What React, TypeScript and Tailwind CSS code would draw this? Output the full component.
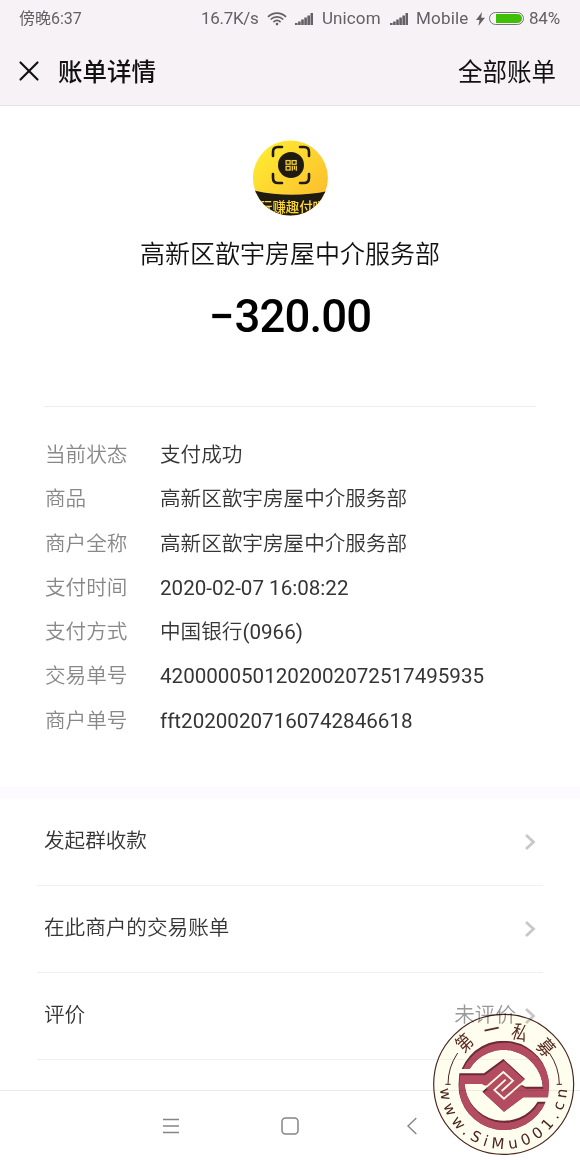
import { X } from "lucide-react";

const details = [
  { label: "当前状态", value: "支付成功" },
  { label: "商品", value: "高新区歆宇房屋中介服务部" },
  { label: "商户全称", value: "高新区歆宇房屋中介服务部" },
  { label: "支付时间", value: "", digits: "2020-02-07 16:08:22" },
  { label: "支付方式", value: "中国银行", digits: "(0966)" },
  { label: "交易单号", value: "", digits: "4200000501202002072517495935" },
  { label: "商户单号", value: "", digits: "fft20200207160742846618" },
];

const actions = [
  { label: "发起群收款", hint: "" },
  { label: "在此商户的交易账单", hint: "" },
  { label: "评价", hint: "未评价" },
];

function Signal() {
  return (
    <svg className="h-3 w-[18px]" viewBox="0 0 18 12" fill="#636165">
      <rect x="0" y="10" width="2.6" height="2" />
      <rect x="3.1" y="8.5" width="2.6" height="3.5" />
      <rect x="6.2" y="6.5" width="2.6" height="5.5" />
      <rect x="9.3" y="4.5" width="2.6" height="7.5" />
      <rect x="12.4" y="2.5" width="2.6" height="9.5" />
      <rect x="15.5" y="0" width="2.5" height="12" />
    </svg>
  );
}

function StatusBar() {
  return (
    <div className="flex h-9 items-center pl-[19px] pt-px text-[17px] text-[#636165]">
      <span className="w-[182px] text-[16px]">傍晚6:37</span>
      <span className="w-[66px] tracking-[-0.3px]">16.7K/s</span>
      <svg className="mr-2 h-[14px] w-5" viewBox="0 0 20 14" fill="none" stroke="#636165" strokeWidth="1.7">
        <path d="M1 4.8C6-.2 14-.2 19 4.8" />
        <path d="M3.7 7.5C7.3 4 12.7 4 16.3 7.5" />
        <path d="M6.4 10.1c2.2-2 5-2 7.2 0" />
        <circle cx="10" cy="12.1" r="1.3" fill="#636165" stroke="none" />
      </svg>
      <Signal />
      <span className="ml-[9px] w-[68px] tracking-[0.1px]">Unicom</span>
      <Signal />
      <span className="ml-2 w-[60px] tracking-[0.2px]">Mobile</span>
      <svg className="h-[14px] w-[9px]" viewBox="0 0 9 14" fill="#636165">
        <path d="M6 0 0 8h3.6L2.4 14 9 5.7H5.2z" />
      </svg>
      <div className="ml-[4px] mr-[5px] h-[13px] w-[35px] rounded-full border border-[#777] p-px">
        <div className="ml-[5px] h-full rounded-r-full bg-[#3fbf08]" />
      </div>
      <span className="tracking-[-0.2px]">84%</span>
    </div>
  );
}

function MerchantLogo() {
  return (
    <svg className="h-[76px] w-[76px]" viewBox="0 0 76 76">
      <defs>
        <linearGradient id="gold" x1="0" y1="0" x2="1" y2="1">
          <stop offset="0" stopColor="#fff133" />
          <stop offset="1" stopColor="#fbb52c" />
        </linearGradient>
        <clipPath id="round">
          <circle cx="38.4" cy="38" r="37.5" />
        </clipPath>
      </defs>
      <g clipPath="url(#round)">
        <rect width="76" height="76" fill="url(#gold)" />
        <path d="M0 50Q38 59 76 51V76H0z" fill="#201b12" />
        <g fontFamily="'Noto Sans CJK SC', sans-serif" fontWeight="500" fontSize="13.4" fill="#ffd92f">
          <text x="7" y="71.5">玩赚趣付呗</text>
        </g>
      </g>
      <circle cx="39" cy="25" r="13" fill="#201b12" />
      <g fill="none" stroke="#201b12" strokeWidth="2.6" strokeLinecap="round">
        <path d="M21 16v-4q0-5 5-5h4" />
        <path d="M48 7h4q5 0 5 5v4" />
        <path d="M21 34v4q0 5 5 5h4" />
        <path d="M48 43h4q5 0 5-5v-4" />
      </g>
      <g fill="none" stroke="#f2cf32" strokeWidth="1.3">
        <rect x="34.1" y="20.6" width="4" height="3.6" />
        <rect x="40.1" y="20.6" width="4" height="3.6" />
        <rect x="34.1" y="26.4" width="4" height="3.6" />
        <path d="M40.3 25.8v5M42.4 25.8v4M44.3 25.8v5" />
      </g>
    </svg>
  );
}

function Seal() {
  // one half of the emblem, the other is the same shape turned by 180 degrees
  const half =
    "M20 102A136 136 0 0 1 282 151L279 187H205L147 230 82 170 144 112 210 155H263A118 118 0 0 0 44 102Z";
  return (
    <svg className="absolute left-[420px] top-[990px] h-[170px] w-40 mix-blend-multiply" viewBox="0 0 480 510">
      <defs>
        <clipPath id="emblem">
          <path d={half} />
          <path d={half} transform="rotate(180 146 151)" />
        </clipPath>
        <path id="sealBottom" d="M60 286A191 191 0 0 0 442 286" />
      </defs>
      <circle cx="251" cy="283" r="210" fill="#fffeee" stroke="#4a2520" strokeWidth="3.5" />
      <g fill="none" stroke="#4a2520" strokeWidth="3">
        <path d="M113 189A167 167 0 0 0 84 283M76 283H92" />
        <path d="M388 189A167 167 0 0 1 418 283M410 283H426" />
      </g>
      <g transform="translate(105 135)">
        <g clipPath="url(#emblem)">
          <rect width="300" height="300" fill="#6b2a38" />
          <g fill="#b34b61" transform="translate(2 6)">
            <path d={half} />
            <path d={half} transform="rotate(180 146 151)" />
          </g>
        </g>
        <g fill="none" stroke="#fffbe0" strokeWidth="5.5">
          <path d="M80 154H96L145 111 174 137 140 168" />
          <path d="M212 148H196L147 191 118 165 152 134" />
        </g>
      </g>
      <g
        fontFamily="'Noto Sans CJK SC', sans-serif"
        fontSize="59"
        fontWeight="400"
        fill="#5a2a24"
        textAnchor="middle"
      >
        <text transform="translate(133 158) rotate(-43) scale(.8 1)" y="22">第</text>
        <text transform="translate(215 118) rotate(-12) scale(.8 1)" y="22">一</text>
        <text transform="translate(300 127) rotate(17) scale(.8 1)" y="22">私</text>
        <text transform="translate(378 172) rotate(49) scale(.8 1)" y="22">募</text>
      </g>
      <text fontFamily="'DejaVu Sans', sans-serif" fontSize="45" fill="#4a2520">
        <textPath href="#sealBottom" startOffset="10" textLength="578">
          www.SiMu001.cn
        </textPath>
      </text>
    </svg>
  );
}

export default function App() {
  return (
    <div className="relative flex h-[1160px] w-[580px] flex-col overflow-hidden bg-white font-[Roboto,'Noto_Sans_CJK_SC',sans-serif] text-[#353535]">
      {/* Header */}
      <header className="h-[106px] border-b border-[#e6e2e6] bg-[#f6f2f6]">
        <StatusBar />
        <div className="flex h-[70px] items-center pl-3 pr-6 text-[24.5px] text-[#111]">
          <X className="h-[34px] w-[34px]" strokeWidth={1.5} />
          <h1 className="ml-3 flex-1 pt-[5px] font-medium">账单详情</h1>
          <span className="pt-[5px]">全部账单</span>
        </div>
      </header>

      {/* Merchant and amount */}
      <section className="mx-11 flex h-[301px] flex-col items-center border-b border-[#ececec] pt-[34px]">
        <MerchantLogo />
        <p className="mt-[21px] text-[25px] leading-9 font-[350] text-[#111]">高新区歆宇房屋中介服务部</p>
        <p className="mt-[18px] flex items-center text-[45.5px] leading-[52px] font-medium tracking-[-0.9px] text-black">
          <span className="mr-px">−</span>
          <span>320.00</span>
        </p>
      </section>

      {/* Details */}
      <dl className="h-[380px] pl-[45px] pt-[26px] text-[20.6px] leading-[44.3px] font-[350]">
        {details.map((row) => (
          <div key={row.label} className="flex">
            <dt className="w-[115px] text-[#888]">{row.label}</dt>
            <dd>
              {row.value}
              {row.digits && <span className="font-normal">{row.digits}</span>}
            </dd>
          </div>
        ))}
      </dl>
      <div className="h-3 bg-[#fdfaff]" />

      {/* Actions */}
      <ul className="mx-[37px] h-[291px]">
        {actions.map((item) => (
          <li
            key={item.label}
            className="flex h-[87px] items-center border-b border-[#f0f0f0] pl-[7px] pr-[7px] text-[20.6px] font-[350]"
          >
            <span className="flex-1 pb-[2px]">{item.label}</span>
            <span className="mr-2 pb-[2px] text-[#999]">{item.hint}</span>
            <svg className="h-[18px] w-3" viewBox="0 0 12 18" fill="none" stroke="#c8c8c8" strokeWidth="2.8">
              <path d="M2 2l7.5 7L2 16" />
            </svg>
          </li>
        ))}
      </ul>

      {/* Navigation keys */}
      <nav className="flex h-[70px] items-center border-t border-[#ebebeb] pl-[162px]">
        <svg className="h-[18px] w-[18px]" viewBox="0 0 18 18" stroke="#858585" strokeWidth="1.4">
          <path d="M1 2.5h16M1 9h16M1 15.5h16" />
        </svg>
        <svg className="ml-[101px] h-[18px] w-[18px]" viewBox="0 0 18 18" fill="none" stroke="#858585" strokeWidth="1.5">
          <rect x="1" y="1" width="16" height="16" rx="3.5" />
        </svg>
        <svg className="ml-[108px] h-[18px] w-[10px]" viewBox="0 0 10 18" fill="none" stroke="#858585" strokeWidth="1.4">
          <path d="M9.3 1 1 9l8.3 8" />
        </svg>
      </nav>

      <Seal />
    </div>
  );
}
